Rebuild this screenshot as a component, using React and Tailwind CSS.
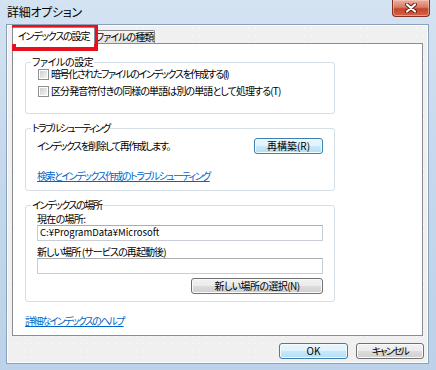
import React from "react";

const font = "font-['Noto_Sans_CJK_JP',sans-serif] [font-feature-settings:'palt']";

const btnGray =
  "h-[16px] rounded-[3px] border border-[#707070] bg-[linear-gradient(#f2f2f2_0%,#ebebeb_50%,#dddddd_50%,#cfcfcf_100%)] shadow-[inset_0_0_0_1px_#fbfbfb] flex items-center justify-center text-[10px] leading-none text-black whitespace-nowrap";
const btnBlue =
  "h-[16px] rounded-[3px] border border-[#3c7fb1] bg-[linear-gradient(#eaf6fd_0%,#dff2fc_50%,#c8e8fa_50%,#b5ddf4_100%)] shadow-[inset_0_0_0_1px_#f4fbff] flex items-center justify-center text-[10px] leading-none text-black whitespace-nowrap";

function Checkbox() {
  return (
    <div className="w-[11px] h-[11px] border border-[#8f8f8f] bg-white p-[1px] shrink-0">
      <div className="w-full h-full bg-[linear-gradient(135deg,#cfcfcf,#f4f4f4)]" />
    </div>
  );
}

function Group({ title, titleClass = "", children, className = "" }) {
  return (
    <fieldset className={"w-[310px] border border-[#d5dfe5] rounded-[3px] px-[11px] " + className}>
      <legend className={"-ml-[6px] px-[1px] text-[10px] leading-[10px] text-black whitespace-nowrap " + titleClass}>
        {title}
      </legend>
      {children}
    </fieldset>
  );
}

function TextBox({ value }) {
  return (
    <div className="h-[16px] w-[286px] border border-[#c9ced6] border-t-[#abadb3] bg-white flex items-center px-[2px] text-[9.5px] leading-none text-black whitespace-nowrap">
      {value}
    </div>
  );
}

export default function App() {
  return (
    <div
      className={
        "relative w-[436px] h-[370px] overflow-hidden bg-[linear-gradient(180deg,#d4e3f2_0%,#c6d9ed_40%,#bcd2ea_100%)] " +
        font
      }
    >
      {/* Title bar */}
      <div className="h-[24px] flex items-start justify-between pr-[6px]">
        <div className="h-[24px] flex items-center pl-[7px] text-[12px] leading-none text-black tracking-[-0.3px]">詳細オプション</div>
        <div className="w-[38px] h-[17px] rounded-b-[4px] border border-t-0 border-[#83301f] bg-[linear-gradient(180deg,#eab0a3_0%,#d97a63_45%,#c5452b_55%,#d4644a_100%)] flex items-center justify-center shadow-[inset_0_0_0_1px_rgba(255,210,200,0.5)]">
          <svg width="12" height="10" viewBox="0 0 12 10">
            <path d="M2 1.5 L10 8.5 M10 1.5 L2 8.5" stroke="#5a1e12" strokeWidth="4" strokeLinecap="round" />
            <path d="M2 1.5 L10 8.5 M10 1.5 L2 8.5" stroke="#ffffff" strokeWidth="2.2" strokeLinecap="round" />
          </svg>
        </div>
      </div>

      {/* Body */}
      <div className="ml-[6px] w-[423px] h-[340px] border border-[#8aa1b9] bg-[#f0f0f0] bg-[radial-gradient(circle,#fbfbfb_0.7px,transparent_1px)] bg-[length:7px_7px] shadow-[inset_0_0_0_1px_#fdfdfd]">
        <div className="pl-[5px]">
          {/* Tabs */}
          <div className="mt-[2px] h-[16px] flex items-end">
            <div className="relative z-10 -mb-[1px] h-[17px] w-[83px] bg-white border border-b-0 border-[#898c95] rounded-t-[2px] flex items-center justify-center text-[10px] leading-none text-black whitespace-nowrap tracking-[-1.2px]">
              インデックスの設定
            </div>
            <div className="h-[13px] w-[60px] bg-[linear-gradient(#f5f5f5,#e1e1e1)] border border-b-0 border-l-0 border-[#898c95] rounded-tr-[2px] flex items-center justify-center text-[10px] leading-none text-black whitespace-nowrap tracking-[-1px]">
              ファイルの種類
            </div>
          </div>

          {/* Panel */}
          <div className="w-[411px] h-[293px] border border-[#898c95] bg-white pt-[13px] pl-[12px] flex flex-col">
            <Group title="ファイルの設定" titleClass="tracking-[-0.4px]" className="pb-[16px]">
              <div className="mt-[1px] h-[12px] flex items-center gap-[2px] ml-[1px] text-[10px] leading-none text-black whitespace-nowrap">
                <Checkbox />
                <span className="tracking-[-1.4px]">暗号化されたファイルのインデックスを作成する(I)</span>
              </div>
              <div className="mt-[5px] h-[12px] flex items-center gap-[2px] ml-[1px] text-[10px] leading-none text-black whitespace-nowrap">
                <Checkbox />
                <span className="tracking-[-0.9px]">区分発音符付きの同様の単語は別の単語として処理する(T)</span>
              </div>
            </Group>

            <Group title="トラブルシューティング" titleClass="tracking-[-1.7px]" className="mt-[9px] pb-[8px]">
              <div className="mt-[5px] h-[15px] flex items-center justify-between">
                <span className="text-[10px] leading-none text-black whitespace-nowrap tracking-[-1.5px]">インデックスを削除して再作成します。</span>
                <div className={btnBlue + " w-[69px] h-[15px]"}>再構築(R)</div>
              </div>
              <div className="mt-[17px] h-[12px] flex items-center">
                <span className="text-[10px] leading-none text-[#0066cc] underline underline-offset-[1px] whitespace-nowrap tracking-[-1.5px]">
                  検索とインデックス作成のトラブルシューティング
                </span>
              </div>
            </Group>

            <Group title="インデックスの場所" titleClass="tracking-[-1.4px]" className="mt-[9px] pb-[7px]">
              <div className="mt-[3px] h-[12px] flex items-center text-[10px] leading-none text-black whitespace-nowrap tracking-[-0.7px]">現在の場所:</div>
              <TextBox value="C:¥ProgramData¥Microsoft" />
              <div className="mt-[5px] h-[12px] flex items-center text-[10px] leading-none text-black whitespace-pre tracking-[-0.9px]">
                新しい場所 (サービスの再起動後)
              </div>
              <TextBox value="" />
              <div className="mt-[4px] flex justify-end w-[286px]">
                <div className={btnGray + " w-[132px] tracking-[-0.6px]"}>新しい場所の選択(N)</div>
              </div>
            </Group>

            <div className="mt-[13px] h-[12px] flex items-center">
              <span className="text-[10px] leading-none text-[#0066cc] underline underline-offset-[1px] whitespace-nowrap tracking-[-1.7px]">
                詳細なインデックスのヘルプ
              </span>
            </div>
          </div>

          {/* Bottom buttons */}
          <div className="mt-[7px] w-[412px] flex justify-end gap-[8px]">
            <div className={btnBlue + " w-[69px]"}>OK</div>
            <div className={btnGray + " w-[68px] tracking-[-1.8px]"}>キャンセル</div>
          </div>
        </div>
      </div>

      {/* Red highlight around active tab */}
      <div className="absolute left-[12px] top-[25px] w-[86px] h-[26px] border-[4px] border-[#e8101c]" />
    </div>
  );
}
